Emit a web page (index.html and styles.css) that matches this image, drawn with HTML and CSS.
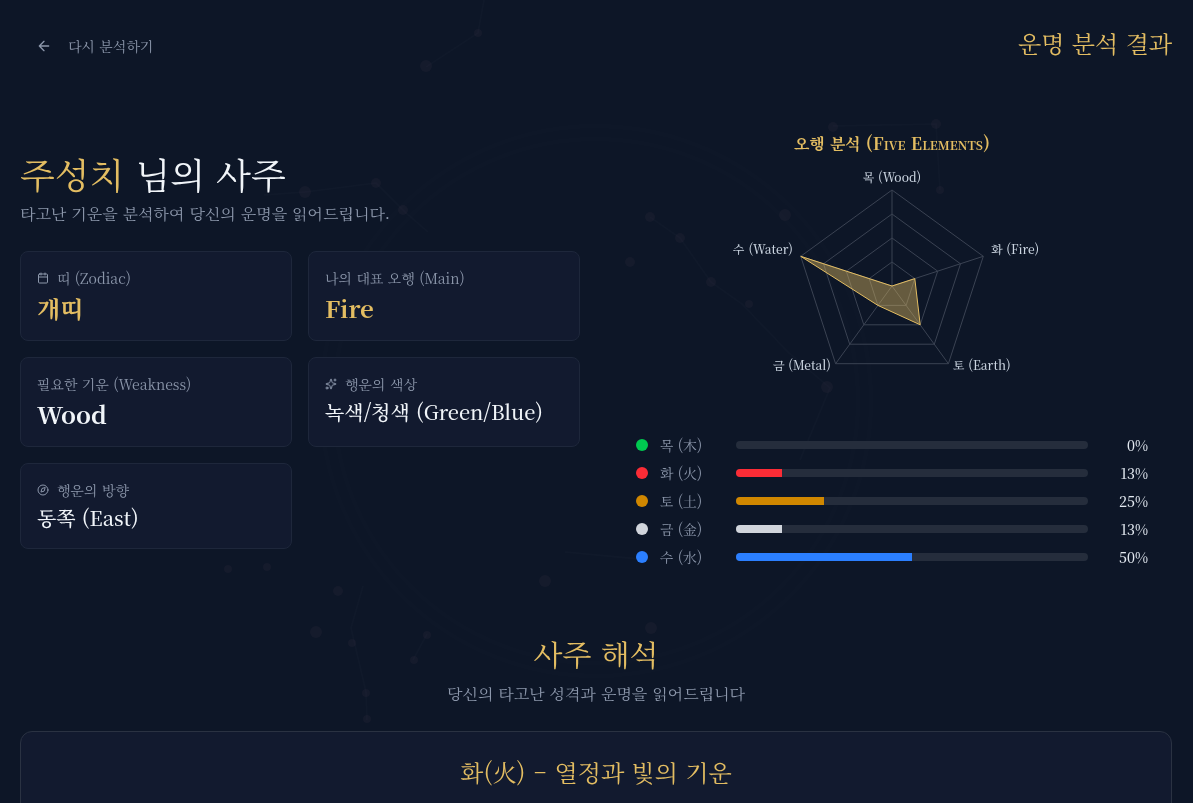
FILE: index.html
```html
<!DOCTYPE html>
<html lang="ko">
<head>
<meta charset="utf-8">
<meta name="viewport" content="width=device-width, initial-scale=1">
<title>운명 분석 결과</title>
<link rel="stylesheet" href="styles.css">
</head>
<body>
<svg class="sky" viewBox="0 0 1193 803" preserveAspectRatio="xMidYMid slice" aria-hidden="true">
  <g class="sky-lines">
    <path d="M484 0L478 33L426 67M264 195L305 192L376 183L405 212L428 232M650 217L680 238L711 282L742 304L788 352L830 388L800 460"/>
    <path d="M833 126L936 124L940 190M363 586L351 628L366 692L367 720M565 552L650 560M427 634L413 660"/>
  </g>
  <g class="sky-rings">
    <circle cx="596" cy="401" r="275"/>
    <circle cx="596" cy="401" r="262"/>
  </g>
  <g class="sky-stars">
    <circle cx="478" cy="33" r="4"/><circle cx="426" cy="66" r="6"/><circle cx="305" cy="192" r="6"/><circle cx="376" cy="183" r="5"/>
    <circle cx="403" cy="210" r="5"/><circle cx="650" cy="217" r="5"/><circle cx="680" cy="238" r="5"/><circle cx="785" cy="215" r="6"/>
    <circle cx="630" cy="262" r="5"/><circle cx="711" cy="282" r="5"/><circle cx="749" cy="304" r="4"/><circle cx="827" cy="387" r="6"/>
    <circle cx="833" cy="127" r="5"/><circle cx="936" cy="124" r="5"/><circle cx="940" cy="190" r="4"/><circle cx="316" cy="632" r="6"/>
    <circle cx="338" cy="591" r="5"/><circle cx="352" cy="643" r="4"/><circle cx="366" cy="693" r="4"/><circle cx="367" cy="719" r="4"/>
    <circle cx="228" cy="569" r="4"/><circle cx="267" cy="567" r="4"/><circle cx="545" cy="581" r="6"/><circle cx="427" cy="635" r="4"/>
    <circle cx="414" cy="660" r="4"/><circle cx="651" cy="628" r="6"/>
  </g>
</svg>

<div class="page">
  <header class="topbar">
    <button class="back" type="button">
      <svg class="back-icon" viewBox="0 0 24 24" aria-hidden="true"><path d="m12 19-7-7 7-7M19 12H5"/></svg>
      <span>다시 분석하기</span>
    </button>
    <h1 class="page-title">운명 분석 결과</h1>
  </header>

  <main>
    <div class="overview">
      <section class="profile">
        <h2 class="name"><span class="gold">주성치</span> 님의 사주</h2>
        <p class="intro">타고난 기운을 분석하여 당신의 운명을 읽어드립니다.</p>
        <div class="facts">
          <div class="fact">
            <h3 class="fact-label"><svg class="fact-icon" viewBox="0 0 24 24" aria-hidden="true"><path d="M8 2v4M16 2v4M3 10h18"/><rect x="3" y="4" width="18" height="18" rx="2"/></svg>띠 (Zodiac)</h3>
            <p class="fact-value strong gold">개띠</p>
          </div>
          <div class="fact">
            <h3 class="fact-label">나의 대표 오행 (Main)</h3>
            <p class="fact-value strong gold">Fire</p>
          </div>
          <div class="fact">
            <h3 class="fact-label">필요한 기운 (Weakness)</h3>
            <p class="fact-value strong">Wood</p>
          </div>
          <div class="fact">
            <h3 class="fact-label"><svg class="fact-icon" viewBox="0 0 24 24" aria-hidden="true"><path d="M11.017 2.814a1 1 0 0 1 1.966 0l1.051 5.558a2 2 0 0 0 1.594 1.594l5.558 1.051a1 1 0 0 1 0 1.966l-5.558 1.051a2 2 0 0 0-1.594 1.594l-1.051 5.558a1 1 0 0 1-1.966 0l-1.051-5.558a2 2 0 0 0-1.594-1.594l-5.558-1.051a1 1 0 0 1 0-1.966l5.558-1.051a2 2 0 0 0 1.594-1.594z"/><path d="M20 2v4M22 4h-4"/><circle cx="4" cy="20" r="2"/></svg>행운의 색상</h3>
            <p class="fact-value">녹색/청색 (Green/Blue)</p>
          </div>
          <div class="fact">
            <h3 class="fact-label"><svg class="fact-icon" viewBox="0 0 24 24" aria-hidden="true"><circle cx="12" cy="12" r="10"/><path d="m16.2 7.8-1.9 6.4-6.4 1.9 1.9-6.4z"/></svg>행운의 방향</h3>
            <p class="fact-value">동쪽 (East)</p>
          </div>
        </div>
      </section>

      <section class="elements">
        <h3 class="elements-title">오행 분석 <span class="caps">(Five Elements)</span></h3>
        <svg class="radar" viewBox="0 0 320 260" role="img" aria-label="오행 분석">
          <g class="grid">
            <path d="M160 106l22.8 16.6-8.7 26.8h-28.2l-8.7-26.8z"/>
            <path d="M160 82l45.7 33.2-17.5 53.6h-56.4l-17.5-53.6z"/>
            <path d="M160 58l68.5 49.8-26.2 80.4h-84.6l-26.2-80.4z"/>
            <path d="M160 34l91.3 66.3-34.9 107.4h-112.8l-34.9-107.4z"/>
            <path d="M160 130V34M160 130l91.3-29.7M160 130l56.4 77.7M160 130l-56.4 77.7M160 130l-91.3-29.7"/>
          </g>
          <path class="area" d="M160 130l22.8-7.4 5.4 46.2-42.3-19.4-77.2-49.1z"/>
          <g class="axis">
            <text x="160" y="26" text-anchor="middle">목 (Wood)</text>
            <text x="259" y="98">화 (Fire)</text>
            <text x="221" y="214">토 (Earth)</text>
            <text x="99" y="214" text-anchor="end">금 (Metal)</text>
            <text x="61" y="98" text-anchor="end">수 (Water)</text>
          </g>
        </svg>
        <ul class="bars">
          <li class="bar wood"><span class="dot"></span><span class="bar-label">목 (木)</span><span class="track"><span class="fill" style="width:0%"></span></span><span class="percent">0%</span></li>
          <li class="bar fire"><span class="dot"></span><span class="bar-label">화 (火)</span><span class="track"><span class="fill" style="width:13%"></span></span><span class="percent">13%</span></li>
          <li class="bar earth"><span class="dot"></span><span class="bar-label">토 (土)</span><span class="track"><span class="fill" style="width:25%"></span></span><span class="percent">25%</span></li>
          <li class="bar metal"><span class="dot"></span><span class="bar-label">금 (金)</span><span class="track"><span class="fill" style="width:13%"></span></span><span class="percent">13%</span></li>
          <li class="bar water"><span class="dot"></span><span class="bar-label">수 (水)</span><span class="track"><span class="fill" style="width:50%"></span></span><span class="percent">50%</span></li>
        </ul>
      </section>
    </div>

    <section class="reading">
      <h2 class="reading-title">사주 해석</h2>
      <p class="reading-intro">당신의 타고난 성격과 운명을 읽어드립니다</p>
      <article class="reading-card">
        <h3 class="reading-heading">화(火) – 열정과 빛의 기운</h3>
      </article>
    </section>
  </main>
</div>
</body>
</html>
```
FILE: styles.css
```css
:root {
  --gold: #e3bd62;
  --text: #f1f5f9;
  --muted: #8c97ab;
  --serif: "Noto Serif KR", "Noto Serif CJK KR", "Liberation Serif", "Noto Sans CJK KR", serif;
}

* { box-sizing: border-box; }

body {
  margin: 0;
  background: #0d1627;
  color: var(--text);
  font-family: var(--serif);
  font-weight: 400;
}

h1, h2, h3, p, ul { margin: 0; padding: 0; font-weight: 400; }

.gold { color: var(--gold); }

.sky {
  position: fixed;
  inset: 0;
  width: 100%;
  height: 100%;
  z-index: -1;
}
.sky-lines, .sky-rings { fill: none; stroke: #fff; stroke-opacity: 0.015; stroke-width: 2; }
.sky-rings { stroke-opacity: 0.007; stroke-width: 5; }
.sky-stars { fill: #e0a0b0; fill-opacity: 0.04; }

.page {
  max-width: 1193px;
  margin: 0 auto;
  padding: 0 21px 0 20px;
}

.topbar {
  display: flex;
  align-items: flex-start;
  justify-content: space-between;
  padding: 24px 0 40px;
}

.back {
  display: flex;
  align-items: center;
  gap: 16px;
  padding: 12px 16px;
  border: 0;
  background: none;
  color: var(--muted);
  font: inherit;
  font-size: 14px;
  line-height: 20px;
  cursor: pointer;
}
.back-icon {
  width: 16px;
  height: 16px;
  fill: none;
  stroke: currentColor;
  stroke-width: 2;
  stroke-linecap: round;
  stroke-linejoin: round;
}

.page-title { color: var(--gold); font-size: 24px; line-height: 38px; }

.overview {
  display: grid;
  grid-template-columns: repeat(2, minmax(0, 1fr));
  gap: 32px;
  align-items: center;
}

.name { margin-bottom: 4px; font-size: 36px; line-height: 46px; }
.intro { margin-bottom: 24px; color: var(--muted); font-size: 16px; line-height: 26px; }

.facts { display: grid; grid-template-columns: repeat(2, minmax(0, 1fr)); gap: 16px; }
.fact {
  padding: 16px;
  border: 1px solid #1e273b;
  border-radius: 8px;
  background: #121a2f;
}
.fact-label {
  display: flex;
  align-items: center;
  gap: 8px;
  margin-bottom: 4px;
  color: var(--muted);
  font-size: 14px;
  line-height: 20px;
}
.fact-icon {
  width: 12px;
  height: 12px;
  fill: none;
  stroke: currentColor;
  stroke-width: 2;
  stroke-linecap: round;
  stroke-linejoin: round;
}
.fact-value { font-size: 20px; font-weight: 500; line-height: 28px; }
.fact-value.strong { font-size: 24px; font-weight: 700; line-height: 32px; }

.elements { padding: 24px 24px 25px; }
.elements-title {
  color: var(--gold);
  font-size: 16px;
  font-weight: 700;
  line-height: 24px;
  text-align: center;
}
.caps { font-size: 17px; font-variant: small-caps; line-height: 1; }

.radar { display: block; width: 100%; height: 260px; }
.grid { fill: none; stroke: #3b4353; stroke-width: 1; }
.area { fill: #e3bd62; fill-opacity: 0.42; stroke: var(--gold); stroke-width: 1; }
.axis { fill: #cbd5e1; font-size: 12px; font-weight: 500; }

.bars { display: grid; gap: 8px; margin-top: 19px; list-style: none; }
.bar {
  display: grid;
  grid-template-columns: 12px 64px minmax(0, 1fr) 48px;
  gap: 12px;
  align-items: center;
  font-size: 14px;
  line-height: 20px;
}
.dot { height: 12px; border-radius: 50%; background: var(--tone); }
.bar-label { color: var(--muted); }
.track { height: 8px; border-radius: 4px; background: #252d3c; overflow: hidden; }
.fill { display: block; height: 100%; background: var(--tone); }
.percent { color: #e2e8f0; font-weight: 500; text-align: right; }
.wood { --tone: #00c950; }
.fire { --tone: #fb2c36; }
.earth { --tone: #d08700; }
.metal { --tone: #d1d5dc; }
.water { --tone: #2b7fff; }

.reading { margin-top: 41px; text-align: center; }
.reading-title { color: var(--gold); font-size: 30px; line-height: 40px; }
.reading-intro { margin: 8px 0 24px; color: var(--muted); font-size: 16px; line-height: 26px; }
.reading-card {
  padding: 24px 24px 40px;
  border: 1px solid #2a3242;
  border-radius: 12px;
  background: #121a2f;
}
.reading-heading { color: var(--gold); font-size: 24px; line-height: 32px; }
```
